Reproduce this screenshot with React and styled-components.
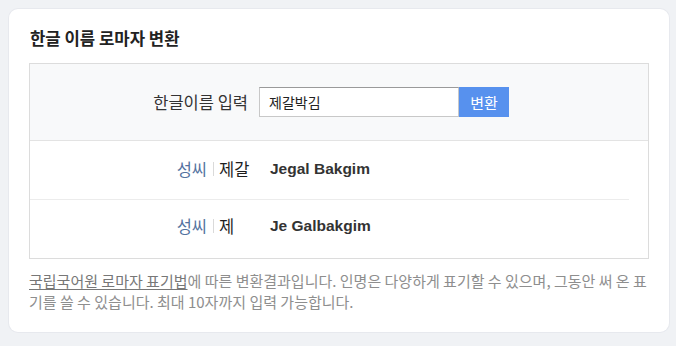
import React from "react";
import styled, { createGlobalStyle } from "styled-components";

const Global = createGlobalStyle`
  html, body { margin: 0; padding: 0; background: #f0f2f5; }
  body { font-family: "Liberation Sans", "Noto Sans CJK KR", sans-serif; }
  * { box-sizing: border-box; }
`;

const Page = styled.div`
  padding: 9px 7px 14px 9px;
`;

const Card = styled.section`
  background: #fff;
  border-radius: 9px;
  box-shadow: 0 0 0 1px #e7e9ee;
  padding: 18px 20px 20px 20px;
`;

const Title = styled.h2`
  margin: 0 0 14px 1px;
  font-size: 16.7px;
  line-height: 22px;
  font-weight: 700;
  color: #222;
  font-family: "Noto Sans CJK KR", sans-serif;
`;

const Box = styled.div`
  border: 1px solid #dcdcdc;
  padding-bottom: 3px;
`;

const InputSection = styled.div`
  background: #f8f9fa;
  border-bottom: 1px solid #e3e3e3;
  height: 77px;
  display: flex;
  align-items: center;
`;

const FieldLabel = styled.label`
  width: 219px;
  text-align: right;
  padding-right: 1px;
  font-family: "Noto Sans CJK KR", sans-serif;
  font-size: 16.5px;
  color: #333;
  margin-right: 10px;
`;

const TextInput = styled.input`
  width: 200px;
  height: 30px;
  border: 1px solid #c8c8c8;
  border-top-color: #9a9a9a;
  padding: 0 9px;
  font-family: "Noto Sans CJK KR", sans-serif;
  font-size: 14px;
  color: #222;
  outline: none;
  background: #fff;
`;

const Button = styled.button`
  width: 50px;
  height: 30px;
  border: none;
  background: #5791ee;
  color: #fff;
  font-family: "Noto Sans CJK KR", sans-serif;
  font-size: 15px;
  padding: 0;
  cursor: pointer;
`;

const Row = styled.div`
  display: flex;
  align-items: center;
  height: ${(p) => (p.$last ? 55 : 59)}px;
  padding-bottom: 3px;
  margin-right: 19px;
  border-bottom: ${(p) => (p.$last ? "none" : "1px solid #ececec")};
`;

const KeyCell = styled.span`
  width: 177px;
  text-align: right;
  font-family: "Noto Sans CJK KR", sans-serif;
  font-size: 16.5px;
  color: #53729f;
`;

const Sep = styled.span`
  display: inline-block;
  width: 1px;
  height: 14px;
  background: #dadada;
  margin: 0 5px 0 6px;
`;

const NameCell = styled.span`
  width: 52px;
  font-family: "Noto Sans CJK KR", sans-serif;
  font-size: 16.5px;
  font-weight: 400;
  color: #1e1e1e;
`;

const Result = styled.span`
  margin-left: -1px;
  font-family: "Liberation Sans", Arial, sans-serif;
  font-size: 15.5px;
  font-weight: 700;
  color: #333;
`;

const Note = styled.p`
  margin: 11px 0 0 0;
  font-family: "Noto Sans CJK KR", sans-serif;
  font-size: 15px;
  line-height: 21px;
  color: #8e8e8e;
  width: 622px;
`;

const Link = styled.a`
  color: #777;
  text-decoration: underline;
  text-underline-offset: 2px;
`;

const results = [
  { surname: "제갈", roman: "Jegal Bakgim" },
  { surname: "제", roman: "Je Galbakgim" },
];

export default function App() {
  return (
    <>
      <Global />
      <Page>
        <Card>
          <Title>한글 이름 로마자 변환</Title>
          <Box>
            <InputSection>
              <FieldLabel htmlFor="name">한글이름 입력</FieldLabel>
              <TextInput id="name" defaultValue="제갈박김" />
              <Button>변환</Button>
            </InputSection>
            {results.map((r, i) => (
              <Row key={r.roman} $last={i === results.length - 1}>
                <KeyCell>성씨</KeyCell>
                <Sep />
                <NameCell>{r.surname}</NameCell>
                <Result>{r.roman}</Result>
              </Row>
            ))}
          </Box>
          <Note>
            <Link>국립국어원 로마자 표기법</Link>에 따른 변환결과입니다. 인명은 다양하게 표기할 수 있으며, 그동안 써 온 표기를 쓸 수 있습니다. 최대 10자까지 입력 가능합니다.
          </Note>
        </Card>
      </Page>
    </>
  );
}
